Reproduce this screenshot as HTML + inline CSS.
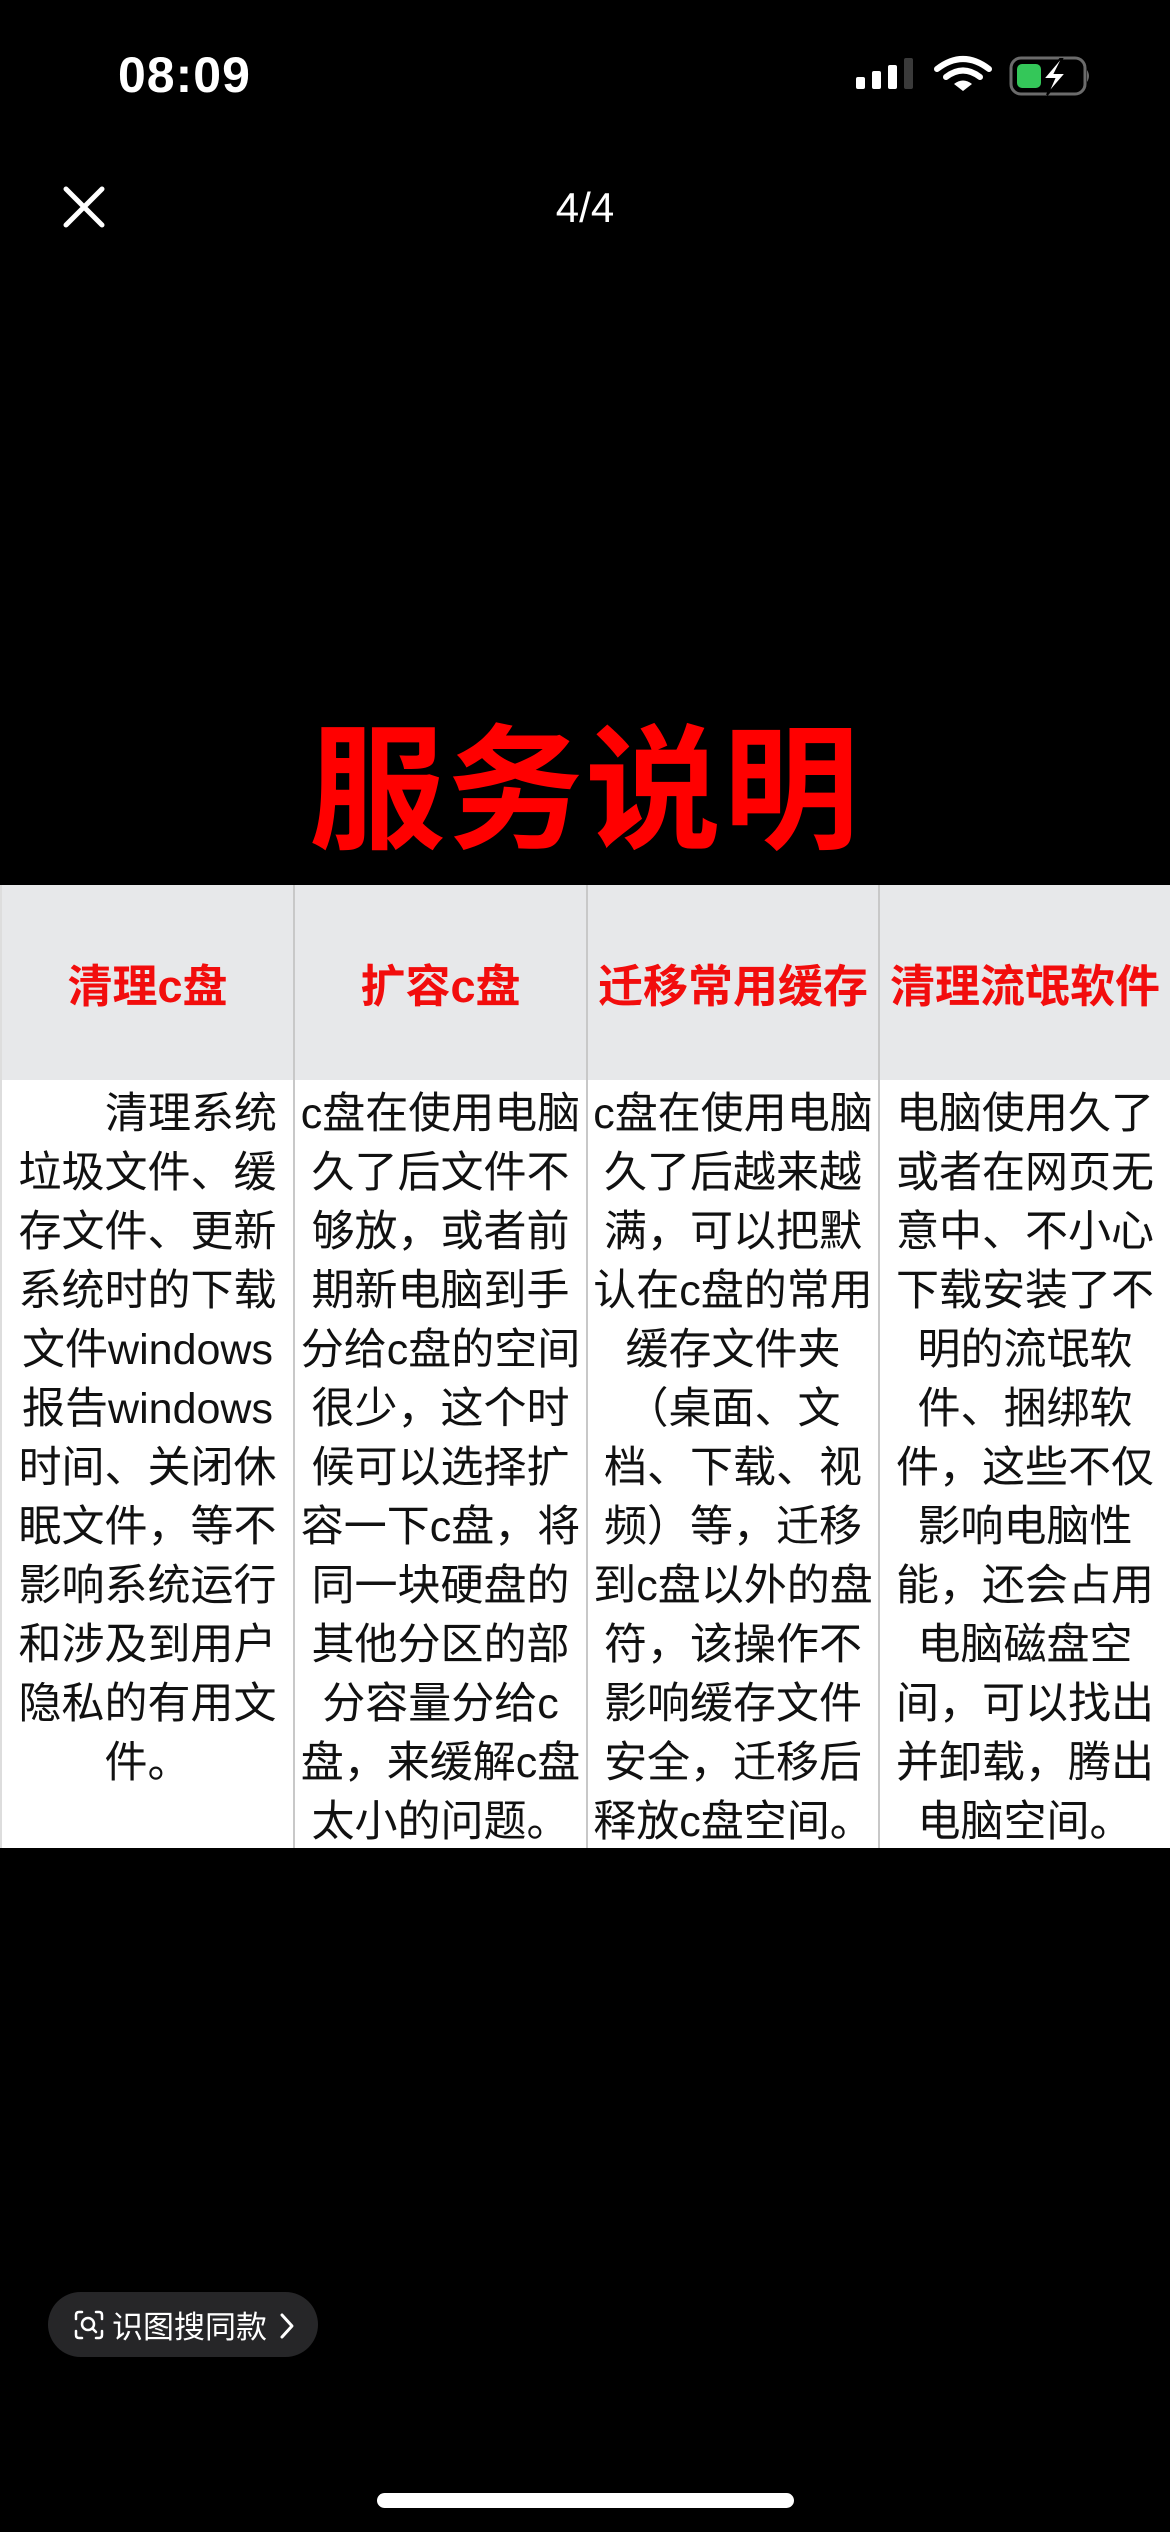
<!DOCTYPE html>
<html><head><meta charset="utf-8">
<style>
*{margin:0;padding:0;box-sizing:border-box}
body{width:1170px;height:2532px;background:#000;position:relative;overflow:hidden;font-family:"Liberation Sans","Noto Sans CJK SC",sans-serif;color:#fff}
.abs{position:absolute}
.time{left:118px;top:46px;font-size:50px;font-weight:600;letter-spacing:1px}
.title{left:0;width:1170px;top:700px;text-align:center;color:#ff0000;font-size:136px;font-weight:700;font-family:"Noto Sans CJK SC",sans-serif;line-height:160px;letter-spacing:2px}
.table{left:0;top:885px;width:1170px;height:963px;background:#fff;display:flex}
.col{flex:0 0 auto;border-left:2px solid #c8c8c8;height:100%}
.col:first-child{border-left:2px solid #ddd}
.head{height:195px;background:#e7e8ea;display:flex;align-items:center;justify-content:center;color:#f20d0d;font-weight:700;font-size:45px;font-family:"Liberation Sans","Noto Sans CJK SC",sans-serif;white-space:nowrap}
.body{padding-top:5px;color:#111;font-size:43px;line-height:59px;font-family:"Liberation Sans","Noto Sans CJK SC",sans-serif;text-align:center;white-space:nowrap}
.pill{left:48px;top:2292px;width:270px;height:65px;border-radius:33px;background:#262628}
.pilltext{left:112px;top:2292px;font-size:31px;font-family:"Noto Sans CJK SC",sans-serif;line-height:65px}
.home{left:377px;top:2493px;width:417px;height:15px;border-radius:8px;background:#fff}
</style></head><body>
<div class="abs time">08:09</div>
<svg class="abs" style="left:850px;top:55px" width="240" height="44" viewBox="0 0 240 44">
 <rect x="6" y="22" width="9" height="12" rx="2" fill="#fff"/>
 <rect x="22" y="16" width="9" height="18" rx="2" fill="#fff"/>
 <rect x="38" y="10" width="9" height="24" rx="2" fill="#fff"/>
 <rect x="54" y="3" width="9" height="31" rx="2" fill="#3a3a3a"/>
 <path d="M87 14 Q113 -6 139 14" stroke="#fff" stroke-width="6" fill="none" stroke-linecap="round"/>
 <path d="M96 22 Q113 9 130 22" stroke="#fff" stroke-width="6" fill="none" stroke-linecap="round"/>
 <path d="M104 29 L113 36 L122 29 Q113 22 104 29Z" fill="#fff"/>
 <rect x="161" y="3" width="74" height="36" rx="10" fill="none" stroke="#6b6b6b" stroke-width="3"/>
 <rect x="167" y="9" width="24" height="24" rx="5" fill="#34c759"/>
 <path d="M210 4 L193 24 L204 24 L197 40 L216 18 L205 18 L212 4Z" fill="#fff" stroke="#000" stroke-width="2"/>
 <path d="M237 15 Q241 21 237 27Z" fill="#6b6b6b"/>
</svg>
<svg class="abs" style="left:62px;top:185px" width="44" height="44" viewBox="0 0 44 44"><path d="M4 4L40 40M40 4L4 40" stroke="#fff" stroke-width="5" stroke-linecap="round"/></svg>
<div class="abs" style="left:0;width:1170px;top:180px;text-align:center;font-size:42px;line-height:56px">4/4</div>
<div class="abs title">服务说明</div>
<div class="abs table">
 <div class="col" style="width:293px">
  <div class="head">清理c盘</div>
  <div class="body"><div style="text-align:right;padding-right:16px">清理系统</div>垃圾文件、缓<br>存文件、更新<br>系统时的下载<br>文件windows<br>报告windows<br>时间、关闭休<br>眠文件，等不<br>影响系统运行<br>和涉及到用户<br>隐私的有用文<br>件。</div>
 </div>
 <div class="col" style="width:293px">
  <div class="head">扩容c盘</div>
  <div class="body">c盘在使用电脑<br>久了后文件不<br>够放，或者前<br>期新电脑到手<br>分给c盘的空间<br>很少，这个时<br>候可以选择扩<br>容一下c盘，将<br>同一块硬盘的<br>其他分区的部<br>分容量分给c<br>盘，来缓解c盘<br>太小的问题。</div>
 </div>
 <div class="col" style="width:292px">
  <div class="head">迁移常用缓存</div>
  <div class="body">c盘在使用电脑<br>久了后越来越<br>满，可以把默<br>认在c盘的常用<br>缓存文件夹<br>（桌面、文<br>档、下载、视<br>频）等，迁移<br>到c盘以外的盘<br>符，该操作不<br>影响缓存文件<br>安全，迁移后<br>释放c盘空间。</div>
 </div>
 <div class="col" style="width:292px">
  <div class="head">清理流氓软件</div>
  <div class="body">电脑使用久了<br>或者在网页无<br>意中、不小心<br>下载安装了不<br>明的流氓软<br>件、捆绑软<br>件，这些不仅<br>影响电脑性<br>能，还会占用<br>电脑磁盘空<br>间，可以找出<br>并卸载，腾出<br>电脑空间。</div>
 </div>
</div>
<div class="abs pill"></div>
<div class="abs pilltext">识图搜同款</div>
<svg class="abs" style="left:279px;top:2312px" width="16" height="28" viewBox="0 0 16 28"><path d="M3 3L13 14L3 25" stroke="#fff" stroke-width="3" fill="none" stroke-linecap="round" stroke-linejoin="round"/></svg>
<svg class="abs" style="left:74px;top:2310px" width="30" height="30" viewBox="0 0 30 30" fill="none" stroke="#fff" stroke-width="2.5" stroke-linecap="round">
 <path d="M2 9V5Q2 2 5 2H8M22 2H25Q28 2 28 5V9M28 21V25Q28 28 25 28H22M8 28H5Q2 28 2 25V21"/>
 <circle cx="14" cy="14" r="6"/><path d="M18.5 18.5L22 22"/>
</svg>
<div class="abs home"></div>
</body></html>
